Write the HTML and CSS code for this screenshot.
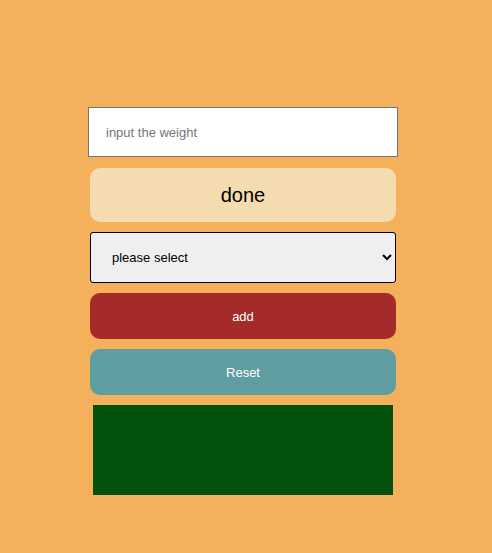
FILE: index.html
```html
<!DOCTYPE html>
<html>
<head>
<meta charset="utf-8">
<link rel="stylesheet" href="styles.css">
</head>
<body>
<div class="panel">
  <input class="weight" type="text" placeholder="input the weight">
  <button class="btn done">done</button>
  <select class="choice">
    <option>please select</option>
  </select>
  <button class="btn add">add</button>
  <button class="btn reset">Reset</button>
  <div class="result"></div>
</div>
</body>
</html>
```

FILE: styles.css
```css
html, body {
  margin: 0;
  padding: 0;
  background: #f4b05a;
  height: 100%;
}
body {
  font-family: "Liberation Sans", Arial, sans-serif;
}
.panel {
  width: 310px;
  margin-left: 88px;
  padding-top: 107px;
  display: flex;
  flex-direction: column;
  align-items: center;
  gap: 10px;
}
.weight {
  box-sizing: border-box;
  width: 310px;
  height: 50px;
  margin: 0 0 1px 0;
  padding: 0 0 0 17px;
  border: 1px solid #767676;
  border-radius: 0;
  background: #fff;
  font-family: "Liberation Sans", Arial, sans-serif;
  font-size: 13px;
  color: #000;
  outline: none;
}
.weight::placeholder {
  color: #757575;
}
.btn {
  box-sizing: border-box;
  width: 306px;
  border: none;
  border-radius: 10px;
  margin: 0;
  padding: 0;
  font-family: "Liberation Sans", Arial, sans-serif;
  font-size: 13px;
  color: #fff;
}
.done {
  height: 54px;
  background: #f5dcb0;
  color: #000;
  font-size: 20px;
}
.add {
  height: 46px;
  background: #a52a2a;
}
.reset {
  height: 46px;
  background: #5f9ea0;
}
.choice {
  box-sizing: border-box;
  width: 306px;
  height: 51px;
  margin: 0;
  padding: 0 4px 0 17px;
  border: 1px solid #000;
  border-radius: 3px;
  background-color: #efefef;
  font-family: "Liberation Sans", Arial, sans-serif;
  font-size: 13px;
  color: #000;
}
.result {
  width: 300px;
  height: 90px;
  background: #05520f;
}
```
